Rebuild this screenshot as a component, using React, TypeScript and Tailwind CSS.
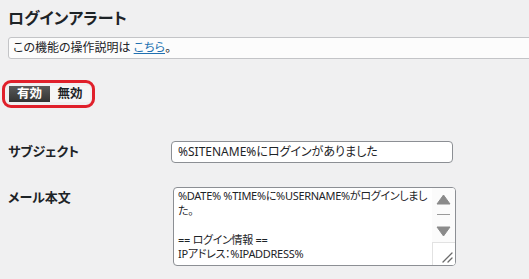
import React from 'react';

const font = "font-['Noto_Sans','Noto_Sans_CJK_JP',sans-serif] [font-feature-settings:'palt']";

const bodyLines = [
  '%DATE% %TIME%に%USERNAME%がログインしまし',
  'た。',
  '',
  '== ログイン情報 ==',
  'IPアドレス：%IPADDRESS%',
];

const ResizeGrip = () => (
  <svg width="12" height="12" viewBox="0 0 12 12" className="absolute right-[2px] bottom-[2px]">
    <path d="M11 2 L2 11 M11 7 L7 11" stroke="#6b6b6b" strokeWidth="1.3" strokeLinecap="round" />
  </svg>
);

const App = () => {
  return (
    <div className={`w-[529px] h-[279px] overflow-hidden bg-[#f0f0f1] text-[#1d2327] ${font}`}>
      {/* Title */}
      <h2 className="ml-2 pt-[8px] text-[16px] font-bold leading-[20px]">ログインアラート</h2>

      {/* Notice */}
      <div className="ml-2 mt-[9px] w-[540px] h-[22px] bg-[#fcfcfc] border border-[#c3c4c7] rounded-[3px] pl-[4px] text-[12px] leading-[20px]">
        この機能の操作説明は <a href="#" className="text-[#2271b1] underline">こちら</a>。
      </div>

      {/* Toggle */}
      <div className="ml-[2px] mt-[21px] w-[93px] border-[3px] border-[#e0202b] rounded-[9px] pl-[4px] py-[3px] flex">
        <span className="w-[41px] h-[16px] flex items-center justify-center bg-gradient-to-b from-[#5a5a5a] to-[#333] text-white text-[12.5px] font-bold leading-none">
          有効
        </span>
        <span className="w-[40px] h-[16px] flex items-center justify-center bg-[#f6f6f6] text-[#1d2327] text-[12.5px] font-bold leading-none">
          無効
        </span>
      </div>

      {/* Subject */}
      <div className="mt-[33px] flex items-center">
        <label className="ml-2 w-[163px] text-[13px] font-bold">サブジェクト</label>
        <div className="w-[282px] h-[22px] bg-white border border-[#8c8f94] rounded-[4px] pl-[6px] text-[12px] leading-[20px]">
          %SITENAME%にログインがありました
        </div>
      </div>

      {/* Body */}
      <div className="mt-[24px] flex items-start">
        <label className="ml-2 w-[165px] text-[13px] font-bold leading-[20px]">メール本文</label>
        <div className="w-[283px] h-[79px] bg-white border border-[#8c8f94] rounded-[4px] flex overflow-hidden">
          <div className="flex-1 min-w-0 overflow-hidden pl-[4px] pt-[1px] text-[11px] leading-[14.5px] whitespace-pre tracking-[-0.3px]">
            {bodyLines.map((l, i) => (
              <div key={i} className="h-[14.5px]">{l}</div>
            ))}
          </div>
          <div className="w-[23px] shrink-0 flex flex-col items-center bg-[#fbfbfb]">
            <svg width="15" height="11" viewBox="0 0 15 11" className="mt-[6px]">
              <path d="M7.5 1 L14 10 L1 10 Z" fill="#8a8a8a" stroke="#8a8a8a" strokeLinejoin="round" />
            </svg>
            <div className="mt-[9px] w-[13px] h-px bg-[#9a9a9a]" />
            <svg width="15" height="11" viewBox="0 0 15 11" className="mt-[11px]">
              <path d="M1 1 L14 1 L7.5 10 Z" fill="#8a8a8a" stroke="#8a8a8a" strokeLinejoin="round" />
            </svg>
            <div className="relative mt-auto w-[23px] h-[23px] border-l border-t border-[#e2e2e2] bg-white">
              <ResizeGrip />
            </div>
          </div>
        </div>
      </div>
    </div>
  );
};

export default App;
